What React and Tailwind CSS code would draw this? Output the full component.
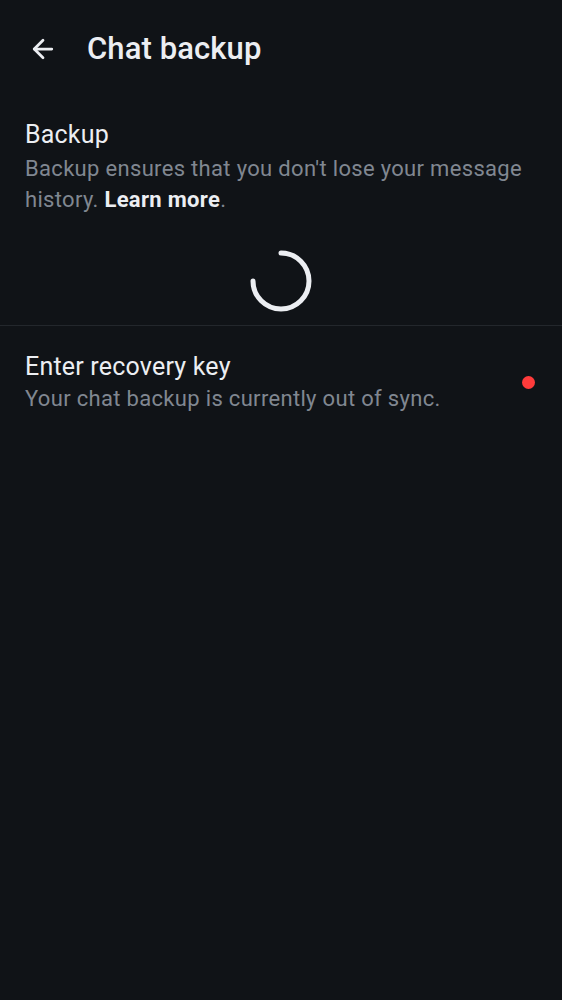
import { ArrowLeft } from "lucide-react";

const Spinner = () => (
  <svg width="66" height="66" viewBox="0 0 66 66" fill="none">
    <path
      d="M33 5 A28 28 0 1 1 5 33"
      stroke="#eceef2"
      strokeWidth="5"
      strokeLinecap="round"
    />
  </svg>
);

const App = () => {
  return (
    <div
      className="min-h-screen w-full bg-[#101317] text-[#eceef2]"
      style={{ fontFamily: "Roboto, 'Noto Sans', sans-serif" }}
    >
      {/* Header */}
      <div className="flex items-center h-[98px] pl-[28px]">
        <ArrowLeft className="w-[30px] h-[30px]" strokeWidth={2.2} />
        <h1 className="ml-[29px] text-[31px] font-medium tracking-[0.1px]">Chat backup</h1>
      </div>

      {/* Backup section */}
      <div className="px-[25px] pt-[21px]">
        <div className="text-[25px] leading-[32px] tracking-[0.2px]">Backup</div>
        <p className="mt-[2px] text-[22px] leading-[31px] text-[#808791] tracking-[0.32px]">
          Backup ensures that you don't lose your message history.{" "}
          <span className="font-bold text-[#eceef2]">Learn more</span>.
        </p>
      </div>
      <div className="flex justify-center pt-[33px] pb-[11px]">
        <Spinner />
      </div>
      <div className="h-px bg-[#23272c]" />

      {/* Recovery key row */}
      <div className="flex items-center justify-between px-[25px] pt-[25px]">
        <div>
          <div className="text-[25px] leading-[32px] tracking-[0.2px]">Enter recovery key</div>
          <div className="text-[22px] leading-[31px] text-[#808791] tracking-[0.32px]">
            Your chat backup is currently out of sync.
          </div>
        </div>
        <div className="w-[13px] h-[13px] rounded-full bg-[#ff3b3b] mr-[2px]" />
      </div>
    </div>
  );
};

export default App;
